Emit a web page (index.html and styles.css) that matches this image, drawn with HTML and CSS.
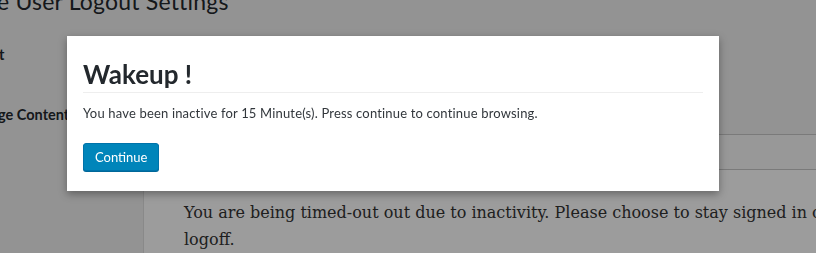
FILE: index.html
```html
<!DOCTYPE html>
<html>
<head>
<meta charset="utf-8">
<link rel="stylesheet" href="styles.css">
</head>
<body>
<div class="page">
  <h1 class="page-title">e User Logout Settings</h1>
  <div class="columns">
    <div class="side">
      <div class="side-item first">t</div>
      <div class="side-item">ge Content</div>
    </div>
    <div class="main">
      <div class="row row-a"></div>
      <div class="content">
        <p>You are being timed-out out due to inactivity. Please choose to stay signed in or logoff.</p>
      </div>
    </div>
  </div>
</div>
<div class="overlay"></div>
<div class="modal">
  <h2 class="modal-title">Wakeup !</h2>
  <p class="modal-text">You have been inactive for 15 Minute(s). Press continue to continue browsing.</p>
  <button class="btn">Continue</button>
</div>
</body>
</html>
```
FILE: styles.css
```css
html, body {
  margin: 0;
  padding: 0;
  width: 816px;
  height: 253px;
  overflow: hidden;
  background: #f1f1f1;
  font-family: Lato, "Noto Sans", sans-serif;
  color: #23282d;
}
.page {
  width: 816px;
  height: 253px;
}
.page-title {
  margin: 0 0 0 -3px;
  font-size: 23px;
  font-weight: 400;
  line-height: 23px;
  height: 14px;
  transform: translateY(-10px);
  letter-spacing: 0.2px;
  white-space: nowrap;
}
.columns {
  display: flex;
  height: 239px;
}
.side {
  width: 143px;
  flex: none;
  padding-top: 32px;
}
.side-item {
  font-size: 14.5px;
  font-weight: 700;
  line-height: 18px;
  margin-left: -2px;
  height: 60px;
  white-space: nowrap;
}
.side-item.first {
  margin-left: -1px;
}
.main {
  flex: 1;
  display: flex;
  flex-direction: column;
  margin-top: 120px;
}
.row {
  border-top: 1px solid #c8c8c8;
  background: #f9f9f9;
}
.row-a { height: 36px; }
.content {
  flex: 1;
  background: #fff;
  border-top: 1px solid #c8c8c8;
  border-left: 1px solid #e0e0e0;
  padding: 29px 0 0 40px;
}
.content p {
  margin: 0;
  font-family: "DejaVu Serif", serif;
  font-size: 16px;
  line-height: 27px;
  color: #333;
  width: 650px;
}
.overlay {
  position: fixed;
  inset: 0;
  background: rgba(0, 0, 0, 0.39);
}
.modal {
  position: absolute;
  left: 67px;
  top: 36px;
  width: 620px;
  height: 155px;
  padding: 0 16px;
  background: #fff;
  box-shadow: 0 3px 8px rgba(0, 0, 0, 0.35);
}
.modal-title {
  margin: 21px 0 0;
  font-size: 26px;
  font-weight: 700;
  line-height: 34px;
  color: #23282d;
  padding-bottom: 1px;
  border-bottom: 1px solid #eeeeee;
}
.modal-text {
  margin: 11px 0 0;
  font-size: 13px;
  letter-spacing: 0.17px;
  line-height: 18px;
  color: #32373c;
}
.btn {
  margin-top: 21px;
  height: 28px;
  padding: 0 11px;
  background: #0085ba;
  border: 1px solid #0073aa;
  border-radius: 3px;
  box-shadow: 0 1px 0 #006799;
  color: #fff;
  font-family: Lato, "Noto Sans", sans-serif;
  font-size: 13px;
  line-height: 26px;
  cursor: pointer;
}
```
